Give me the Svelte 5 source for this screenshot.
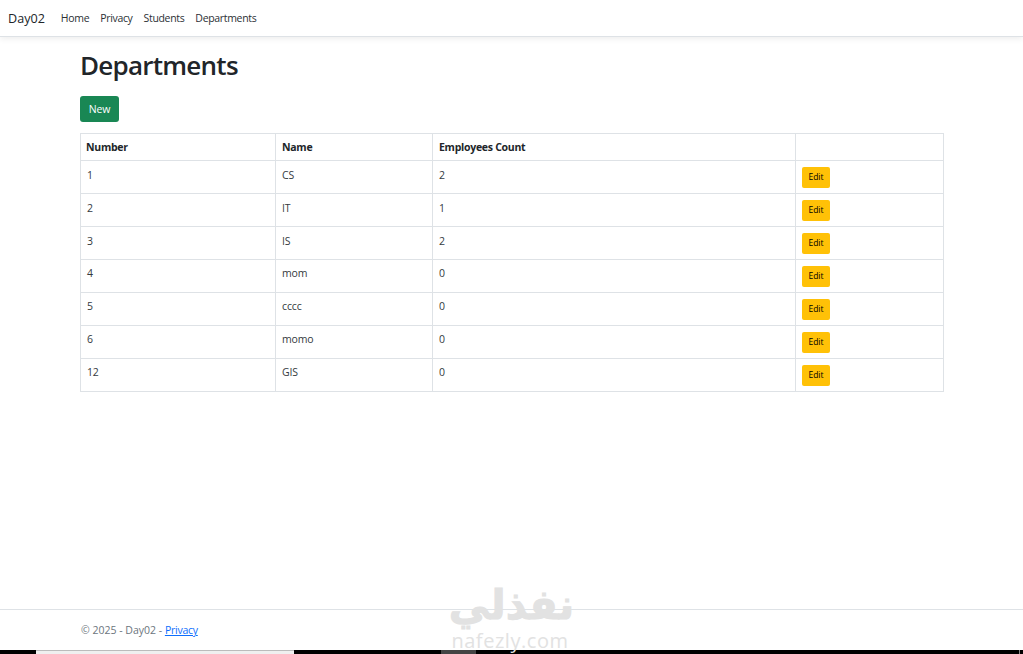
<script>
  const rows = [
    [1, 'CS', 2], [2, 'IT', 1], [3, 'IS', 2], [4, 'mom', 0],
    [5, 'cccc', 0], [6, 'momo', 0], [12, 'GIS', 0]
  ];
  const links = ['Home', 'Privacy', 'Students', 'Departments'];
</script>

<div class="page">
  <header>
    <nav>
      <a class="brand" href="#top">Day02</a>
      <ul>
        {#each links as l}
          <li><a href="#top">{l}</a></li>
        {/each}
      </ul>
    </nav>
  </header>

  <main>
    <h1>Departments</h1>
    <button class="new">New</button>
    <table>
      <colgroup>
        <col class="c1" /><col class="c2" /><col class="c3" /><col />
      </colgroup>
      <thead>
        <tr><th>Number</th><th>Name</th><th>Employees Count</th><th></th></tr>
      </thead>
      <tbody>
        {#each rows as r}
          <tr>
            <td>{r[0]}</td><td>{r[1]}</td><td>{r[2]}</td>
            <td><button class="edit">Edit</button></td>
          </tr>
        {/each}
      </tbody>
    </table>
  </main>

  <footer>© 2025 - Day02 - <a href="#top">Privacy</a></footer>

  <div class="strip">
    <span class="s1"></span><span class="s2"></span><span class="s3"></span><span class="s4"></span><span class="s5"></span><span class="s6"></span><span class="s7"></span>
  </div>

  <div class="mark" aria-hidden="true">
    <div class="ar">نفذلي</div>
    <div class="en">nafezly.com</div>
  </div>
</div>

<style>
  :global(body) {
    margin: 0;
    background: #fff;
  }
  .page {
    position: relative;
    height: 654px;
    overflow: hidden;
    display: flex;
    flex-direction: column;
    font-family: "Open Sans", "Noto Sans", sans-serif;
    color: #212529;
    font-size: 10.5px;
  }
  header {
    height: 36px;
    border-bottom: 1px solid #dee2e6;
    box-shadow: 0 2px 6px rgba(0, 0, 0, 0.07);
    flex: none;
  }
  nav {
    display: flex;
    align-items: center;
    height: 36px;
    padding-left: 8px;
  }
  .brand {
    font-size: 12.6px;
    color: #212529;
    text-decoration: none;
    margin-right: 16px;
  }
  ul {
    display: flex;
    gap: 11px;
    list-style: none;
    margin: 0;
    padding: 0;
    letter-spacing: -0.33px;
  }
  li a {
    color: #2b3035;
    text-decoration: none;
  }
  main {
    flex: 1;
    padding: 0 79px 0 80px;
  }
  h1 {
    font-size: 26px;
    font-weight: 600;
    line-height: 32px;
    margin: 12px 0 15px;
    letter-spacing: -0.75px;
  }
  button {
    font-family: inherit;
    border: none;
    display: block;
  }
  .new {
    width: 39px;
    height: 26px;
    border-radius: 3px;
    background: #198754;
    color: #fff;
    font-size: 10.5px;
    letter-spacing: -0.2px;
    padding: 0;
    margin-bottom: 11px;
  }
  table {
    width: 864px;
    border-collapse: collapse;
    table-layout: fixed;
    letter-spacing: -0.15px;
  }
  .c1 { width: 195px; }
  .c2 { width: 157px; }
  .c3 { width: 363px; }
  th, td {
    border: 1px solid #dee2e6;
    padding: 0 6px;
    text-align: left;
    vertical-align: top;
  }
  th {
    height: 26px;
    font-weight: 700;
    vertical-align: middle;
    color: #212529;
    letter-spacing: -0.27px;
  }
  th:first-child {
    padding-left: 5px;
  }
  td {
    padding-top: 5px;
    padding-bottom: 0;
    box-sizing: border-box;
    height: 33px;
    line-height: 18px;
    color: #343a40;
  }
  tbody tr:nth-child(n + 4) td {
    line-height: 16px;
  }
  .edit {
    width: 28px;
    height: 21px;
    margin-top: 1px;
    border-radius: 2px;
    background: #ffc107;
    color: #000;
    font-size: 8.5px;
    padding: 0 0 2px;
    letter-spacing: 0;
  }
  footer {
    flex: none;
    height: 41px;
    box-sizing: border-box;
    border-top: 1px solid #dee2e6;
    padding: 12px 0 0 81px;
    color: #6c757d;
    line-height: 16px;
  }
  footer a {
    color: #0d6efd;
    letter-spacing: -0.25px;
  }
  .strip {
    flex: none;
    height: 4px;
    display: flex;
    background: #000;
  }
  .strip span { display: block; height: 4px; }
  .s1 { width: 36px; }
  .s2 { width: 258px; background: #efefef; border-top: 1px solid #bbb; box-sizing: border-box; }
  .s3 { width: 147px; }
  .s4 { width: 35px; background: #444; }
  .s5 { flex: 1; }
  .s6 { width: 1px; background: #888; }
  .s7 { width: 3px; }
  .mark {
    position: absolute;
    left: 440px;
    top: 578px;
    width: 143px;
    text-align: center;
    color: #e2e2e2;
    pointer-events: none;
  }
  .ar {
    font-family: "DejaVu Sans", sans-serif;
    font-weight: 700;
    font-size: 41px;
    line-height: 54px;
    -webkit-text-stroke: 1px #e2e2e2;
  }
  .en {
    font-size: 20px;
    line-height: 18px;
    letter-spacing: 0.55px;
    margin-top: 0;
    margin-left: -3px;
  }
</style>
